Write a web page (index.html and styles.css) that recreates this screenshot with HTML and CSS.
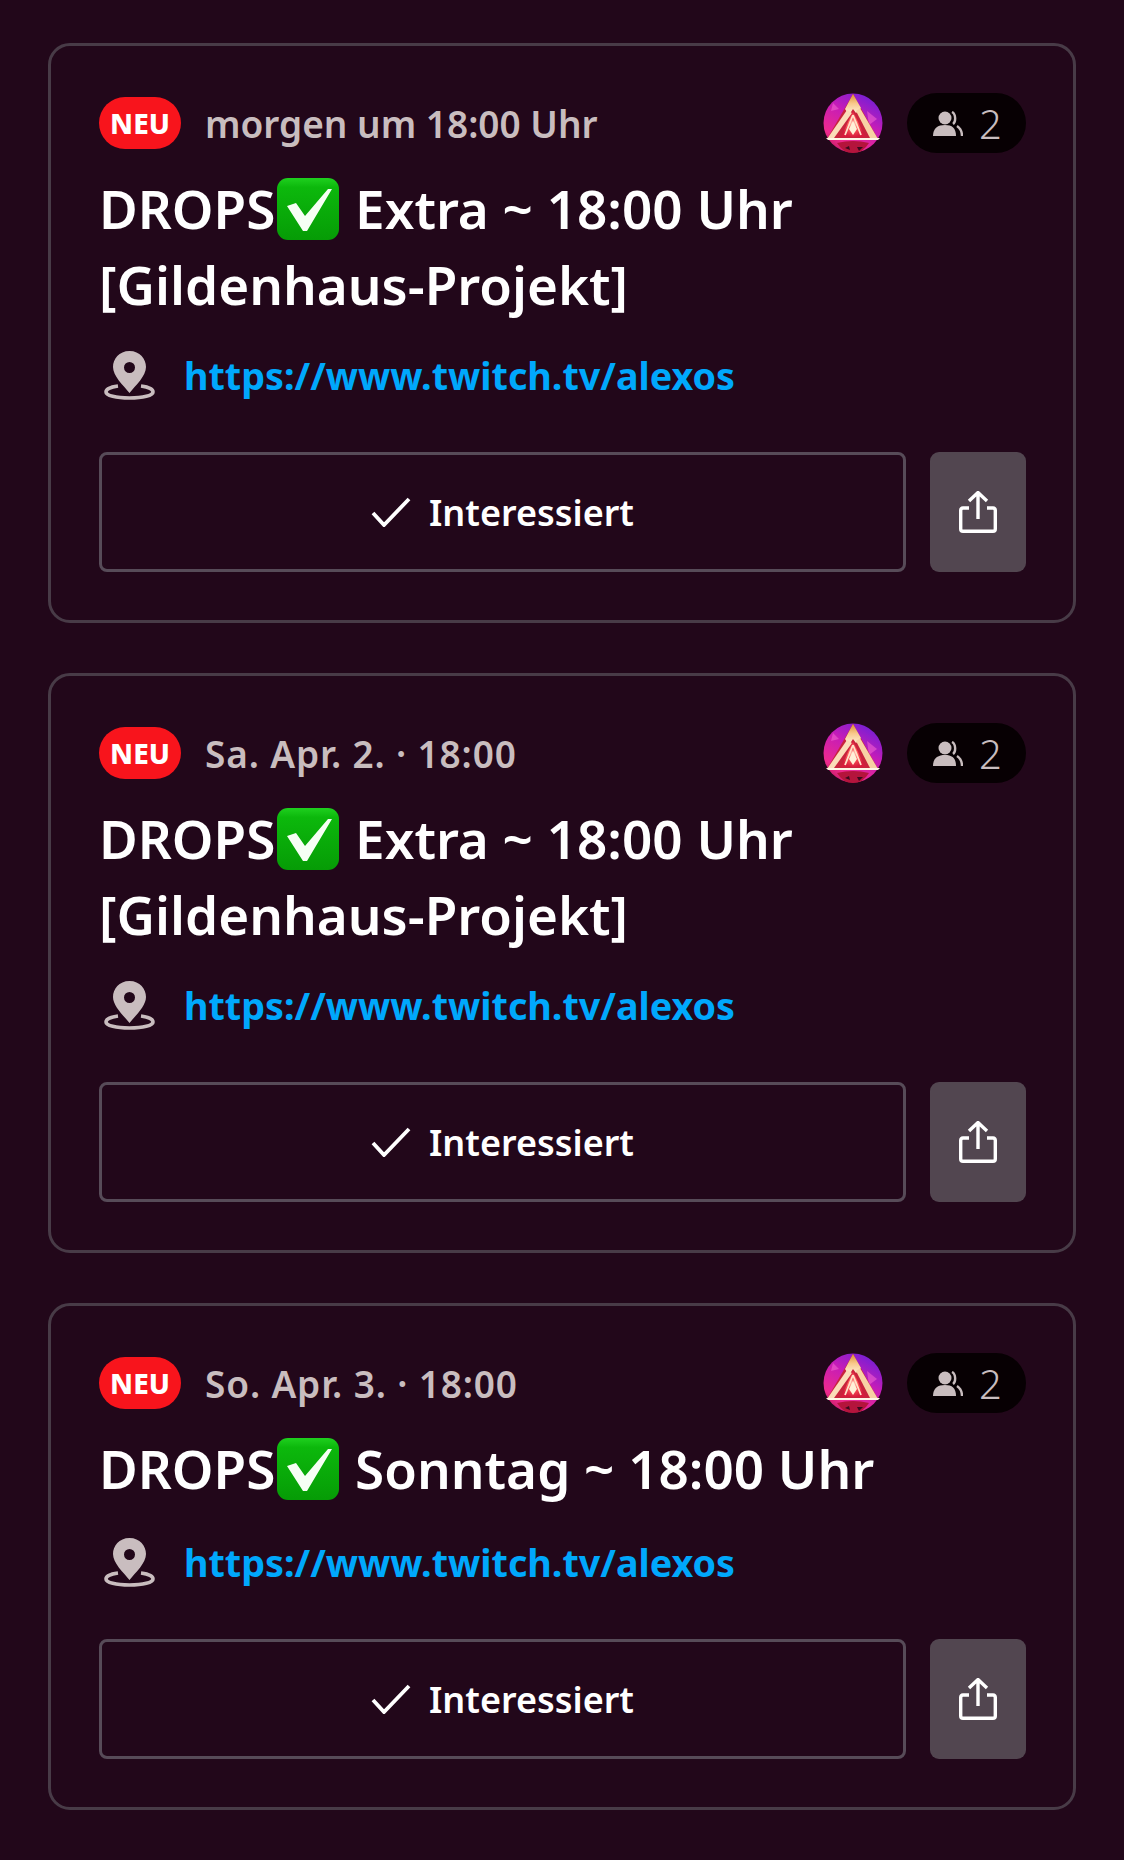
FILE: index.html
```html
<!DOCTYPE html>
<html lang="de">
<head>
<meta charset="utf-8">
<title>Events</title>
<link rel="stylesheet" href="styles.css">
</head>
<body>
<svg class="defs" width="0" height="0" aria-hidden="true">
  <defs>
    <linearGradient id="nebula" x1="0.8" y1="0" x2="0.2" y2="1">
      <stop offset="0" stop-color="#6d1fd8"/>
      <stop offset="0.4" stop-color="#c51cb8"/>
      <stop offset="0.8" stop-color="#ee2a8e"/>
      <stop offset="1" stop-color="#c01a60"/>
    </linearGradient>
    <radialGradient id="glow" cx="50%" cy="50%" r="50%">
      <stop offset="0" stop-color="#fff0d8"/>
      <stop offset="0.4" stop-color="#ff5a5a"/>
      <stop offset="1" stop-color="#d81c3c"/>
    </radialGradient>
    <linearGradient id="peak" x1="0" y1="0" x2="0" y2="1">
      <stop offset="0" stop-color="#d9902e"/>
      <stop offset="0.45" stop-color="#f8c88c"/>
      <stop offset="1" stop-color="#fff4e0"/>
    </linearGradient>
    <linearGradient id="tick" x1="0" y1="0" x2="0" y2="1">
      <stop offset="0" stop-color="#1fd01f"/>
      <stop offset="0.15" stop-color="#0cb80c"/>
      <stop offset="1" stop-color="#069c06"/>
    </linearGradient>
    <symbol id="avatar" viewBox="0 0 60 60">
      <circle cx="30" cy="30" r="29.500" fill="url(#nebula)"/>
      <path d="M10 10 L16 16 L8 18 Z M44 18 L54 26 L46 32 Z" fill="#f060d0" opacity="0.6"/>
      <path d="M14 50 Q30 46 46 50 Q40 60 30 60 Q20 60 14 50 Z" fill="#b4143c"/>
      <path d="M22 55 L26 53 L27 57 Z M34 54 L40 54 L36 58 Z" fill="#3a0a1c"/>
      <path d="M30 1 L55 46 L4 46 Z" fill="#c8233c"/>
      <path d="M30 1 L38 15 L33 20 L30 16 L26 22 L22 16 Z" fill="url(#peak)"/>
      <path d="M24 17 L29 20 L11 45 L4 46 Z" fill="#fbdcb8"/>
      <path d="M33 18 L37 15 L55 46 L47 45 Z" fill="#f8d2a4"/>
      <path d="M30 18 L42 44 L18 44 Z" fill="url(#glow)"/>
      <path d="M30 22 L38 42 M30 22 L22 42" stroke="#ffe2c8" stroke-width="1.800" fill="none"/>
      <path d="M30 28 L34 36 L30 42 L26 36 Z" fill="#fff0d8"/>
      <path d="M3 45 H57 L55 47 H5 Z" fill="#fff6e6"/>
    </symbol>
    <symbol id="tick-box" viewBox="0 0 64 64">
      <rect x="1" y="1" width="62" height="62" rx="11" fill="url(#tick)"/>
      <path d="M11 29 L20 26 L29 39 L52 12 L56 12 L31 54 L27 54 Z" fill="#f6fff4"/>
    </symbol>
    <symbol id="people" viewBox="0 0 30 25">
      <circle cx="12" cy="7" r="6.500" fill="currentColor"/>
      <path d="M0 25 C0 17 5 14 12 14 C19 14 23 17 23 25 Z" fill="currentColor"/>
      <path d="M19 1 C23 3 23 11 20 13 M24 15 C27 17 29 20 29 25" fill="none" stroke="currentColor" stroke-width="2.400"/>
    </symbol>
    <symbol id="pin" viewBox="0 0 51 49">
      <path d="M25.500 0 C15 0 9 8 9 16 C9 25 19 34 25.500 42 C32 34 42 25 42 16 C42 8 36 0 25.500 0 Z M25.500 11 A5.500 5.500 0 1 1 25.500 22 A5.500 5.500 0 1 1 25.500 11 Z" fill="currentColor" fill-rule="evenodd"/>
      <path d="M14 35 C6 36 2 38.500 2 41 C2 44.500 12 47 25.500 47 C39 47 49 44.500 49 41 C49 38.500 45 36 37 35" fill="none" stroke="currentColor" stroke-width="3.600"/>
    </symbol>
    <symbol id="check" viewBox="0 0 40 30">
      <path d="M2 16 L13 28 L38 2" fill="none" stroke="currentColor" stroke-width="3.800"/>
    </symbol>
    <symbol id="share" viewBox="0 0 38 42">
      <path d="M19 2 V28 M10 10 L19 1.500 L28 10" fill="none" stroke="currentColor" stroke-width="3.400"/>
      <path d="M10 17 H4 Q1.700 17 1.700 19.500 V38 Q1.700 40.300 4 40.300 H34 Q36.300 40.300 36.300 38 V19.500 Q36.300 17 34 17 H28" fill="none" stroke="currentColor" stroke-width="3.400"/>
    </symbol>
  </defs>
</svg>

<main class="feed">
  <article class="card">
    <header class="meta">
      <span class="badge">NEU</span>
      <span class="when">morgen um 18:00 Uhr</span>
      <svg class="avatar"><use href="#avatar"/></svg>
      <span class="count"><svg class="people"><use href="#people"/></svg>2</span>
    </header>
    <h2 class="title">DROPS<svg class="tick"><use href="#tick-box"/></svg> Extra ~ 18:00 Uhr [Gildenhaus-Projekt]</h2>
    <div class="place"><svg class="pin"><use href="#pin"/></svg><a class="link" href="#">https://www.twitch.tv/alexos</a></div>
    <div class="actions">
      <button class="interested"><svg class="check"><use href="#check"/></svg>Interessiert</button>
      <button class="share"><svg class="share-icon"><use href="#share"/></svg></button>
    </div>
  </article>

  <article class="card">
    <header class="meta">
      <span class="badge">NEU</span>
      <span class="when date">Sa. Apr. 2. · 18:00</span>
      <svg class="avatar"><use href="#avatar"/></svg>
      <span class="count"><svg class="people"><use href="#people"/></svg>2</span>
    </header>
    <h2 class="title">DROPS<svg class="tick"><use href="#tick-box"/></svg> Extra ~ 18:00 Uhr [Gildenhaus-Projekt]</h2>
    <div class="place"><svg class="pin"><use href="#pin"/></svg><a class="link" href="#">https://www.twitch.tv/alexos</a></div>
    <div class="actions">
      <button class="interested"><svg class="check"><use href="#check"/></svg>Interessiert</button>
      <button class="share"><svg class="share-icon"><use href="#share"/></svg></button>
    </div>
  </article>

  <article class="card">
    <header class="meta">
      <span class="badge">NEU</span>
      <span class="when date">So. Apr. 3. · 18:00</span>
      <svg class="avatar"><use href="#avatar"/></svg>
      <span class="count"><svg class="people"><use href="#people"/></svg>2</span>
    </header>
    <h2 class="title">DROPS<svg class="tick"><use href="#tick-box"/></svg> Sonntag ~ 18:00 Uhr</h2>
    <div class="place"><svg class="pin"><use href="#pin"/></svg><a class="link" href="#">https://www.twitch.tv/alexos</a></div>
    <div class="actions">
      <button class="interested"><svg class="check"><use href="#check"/></svg>Interessiert</button>
      <button class="share"><svg class="share-icon"><use href="#share"/></svg></button>
    </div>
  </article>
</main>
</body>
</html>
```

FILE: styles.css
```css
* { box-sizing: border-box; }

html, body {
  margin: 0;
  background: #22071a;
}

body {
  font-family: "Noto Sans", "Open Sans", sans-serif;
  color: #fff;
}

.defs { position: absolute; }

.feed {
  display: flex;
  flex-direction: column;
  gap: 50px;
  padding: 43px 48px 50px;
}

.card {
  border: 3px solid #483b47;
  border-radius: 22px;
  padding: 47px 47px 48px 48px;
}

.meta {
  display: flex;
  align-items: center;
  height: 60px;
}

.badge {
  display: flex;
  align-items: center;
  justify-content: center;
  width: 82px;
  height: 52px;
  border-radius: 26px;
  background: #f8141c;
  font-size: 28px;
  font-weight: 800;
}

.when {
  margin-left: 24px;
  flex: 1;
  font-size: 37px;
  font-weight: 600;
  color: #c9bdbf;
}

.when.date { letter-spacing: 0.85px; }

.avatar {
  width: 60px;
  height: 60px;
  margin-right: 24px;
}

.count {
  display: flex;
  align-items: center;
  justify-content: center;
  gap: 16px;
  width: 119px;
  height: 60px;
  padding-left: 2px;
  border-radius: 30px;
  background: #070003;
  font-size: 40px;
  font-weight: 300;
  color: #c9bdbf;
}

.people { width: 30px; height: 25px; }

.title {
  margin: 19px 0 0;
  font-size: 53px;
  line-height: 73px;
  font-weight: 600;
}

/* the margin box sits lower than the drawn square, which opens the first line a little */
.tick {
  width: 64px;
  height: 64px;
  vertical-align: -19px;
  margin: 0 1px 7px;
}

.place {
  display: flex;
  align-items: center;
  margin-top: 26px;
  height: 56px;
}

.pin {
  width: 51px;
  height: 49px;
  margin-left: 5px;
  color: #c9bdbf;
}

.link {
  margin-left: 29px;
  font-size: 37.700px;
  font-weight: 700;
  color: #00a8fc;
  text-decoration: none;
}

.actions {
  display: flex;
  gap: 24px;
  margin-top: 49px;
  height: 120px;
}

.interested {
  flex: 1;
  display: flex;
  align-items: center;
  justify-content: center;
  gap: 18px;
  background: transparent;
  border: 3px solid #574b58;
  border-radius: 8px;
  font: 600 36px "Noto Sans", sans-serif;
  color: #fff;
}

.check { width: 40px; height: 30px; }

.share {
  width: 96px;
  display: flex;
  align-items: center;
  justify-content: center;
  background: #524650;
  border: 0;
  border-radius: 9px;
  color: #fff;
}

.share-icon { width: 38px; height: 42px; }
```
